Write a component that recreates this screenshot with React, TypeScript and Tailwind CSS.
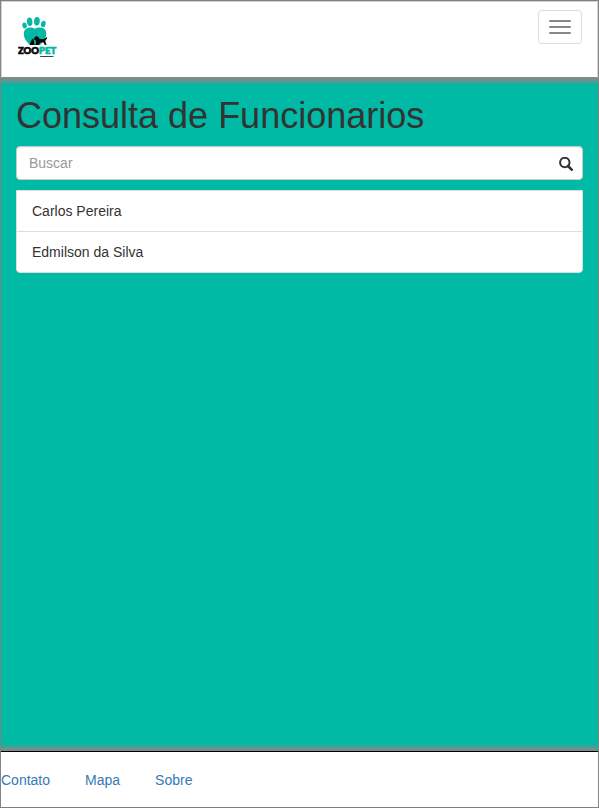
const employees = ["Carlos Pereira", "Edmilson da Silva"];
const footerLinks = ["Contato", "Mapa", "Sobre"];

function Logo() {
  return (
    <svg viewBox="0 0 40 42" className="h-[42px] w-10" role="img" aria-label="Zoopet Veterinaria">
      <g fill="#04b9a3">
        <ellipse cx="6.600" cy="9.500" rx="2.200" ry="3" transform="rotate(-10 6.600 9.500)" />
        <ellipse cx="11.700" cy="5.800" rx="2.700" ry="4.200" transform="rotate(-6 11.700 5.800)" />
        <ellipse cx="18.900" cy="5.200" rx="2.900" ry="4.300" transform="rotate(5 18.900 5.200)" />
        <ellipse cx="25.300" cy="8" rx="2.300" ry="3.300" transform="rotate(12 25.300 8)" />
        <path d="M16.800 12.800C13.500 10.500 8 11 6.300 15C4.500 20 7.500 25 12 29H22C26.500 25 29.500 20 27.800 15C26.300 11 20.500 10.500 16.800 12.800Z" />
      </g>
      <path
        fill="#090909"
        d="M11.500 29L13 25L14.800 22.500L16 25L16.500 29H11.500ZM15.500 23.500L16.500 21.500L18.500 20L20.500 21.200L21.500 22.800C23.500 23.300 25 23.200 26.500 22.800L28.500 21.300L29.300 21.600C29 23.500 27.500 24 27.300 25L28.500 29H26.800L25.300 26.300L22 26.800L21 29H17.500L18.200 26L17.500 24.200L15.500 23.500Z"
      />
      <text x="0" y="37.500" fontSize="9.500" fontWeight="900" className="font-[Lato,'Liberation_Sans',sans-serif]" fill="#090909" stroke="#090909" strokeWidth=".7">
        ZOO<tspan fill="#04b9a3" stroke="#04b9a3">PET</tspan>
      </text>
      <text x="22" y="40.500" fontSize="2" fontWeight="bold" fill="#111111" stroke="#111111" strokeWidth=".2">VETERINARIA</text>
    </svg>
  );
}

export default function App() {
  return (
    <div className="flex min-h-screen flex-col border border-[#808080] bg-[#00baa5] font-['Liberation_Sans',Arial,sans-serif] text-sm leading-5 text-[#333333]">
      <header className="flex h-[77px] items-start justify-between border border-[#d4d4d4] border-b-[#888888] bg-white px-4 shadow-[0_3px_4px_1px_#888888]">
        <a href="#inicio" className="mt-3.5">
          <Logo />
        </a>
        <button
          type="button"
          aria-label="Abrir menu"
          className="-mr-px mt-2 flex h-[34px] w-11 flex-col items-center justify-center gap-1 rounded border border-[#dddddd] bg-white"
        >
          <span className="h-0.5 w-[22px] rounded-[1px] bg-[#888888]" />
          <span className="h-0.5 w-[22px] rounded-[1px] bg-[#888888]" />
          <span className="h-0.5 w-[22px] rounded-[1px] bg-[#888888]" />
        </button>
      </header>

      <main className="flex-1 px-[15px] pt-[18px]">
        <h1 className="text-4xl leading-10 font-medium">Consulta de Funcionarios</h1>
        <form role="search" className="mt-2.5 flex h-[34px] items-center rounded border border-[#cccccc] bg-white px-3 shadow-[inset_0_1px_1px_#eeeeee]">
          <input
            type="text"
            aria-label="Buscar"
            placeholder="Buscar"
            className="min-w-0 flex-1 bg-transparent outline-none placeholder:text-[#999999]"
          />
          <button type="submit" aria-label="Pesquisar" className="-mr-3 flex h-8 w-8 items-center justify-center">
            <svg viewBox="0 0 14 14" className="mt-0.5 h-3.5 w-3.5" fill="none" stroke="#333333" aria-hidden="true">
              <circle cx="5.800" cy="5.500" r="4.700" strokeWidth="2" />
              <path d="M9 9L12.700 12.700" strokeWidth="2.600" strokeLinecap="round" />
            </svg>
          </button>
        </form>
        <ul className="mt-2.5 divide-y divide-[#dddddd] rounded-b border border-[#dddddd] bg-white">
          {employees.map((name) => (
            <li key={name} className="px-[15px] py-2.5">
              {name}
            </li>
          ))}
        </ul>
      </main>

      <footer className="border-t border-black bg-white pt-[18px] pb-[17px] shadow-[0_-3px_4px_1px_#888888]">
        <nav className="flex gap-[35px]">
          {footerLinks.map((link) => (
            <a key={link} href={`#${link.toLowerCase()}`} className="text-[#337ab7]">
              {link}
            </a>
          ))}
        </nav>
      </footer>
    </div>
  );
}
